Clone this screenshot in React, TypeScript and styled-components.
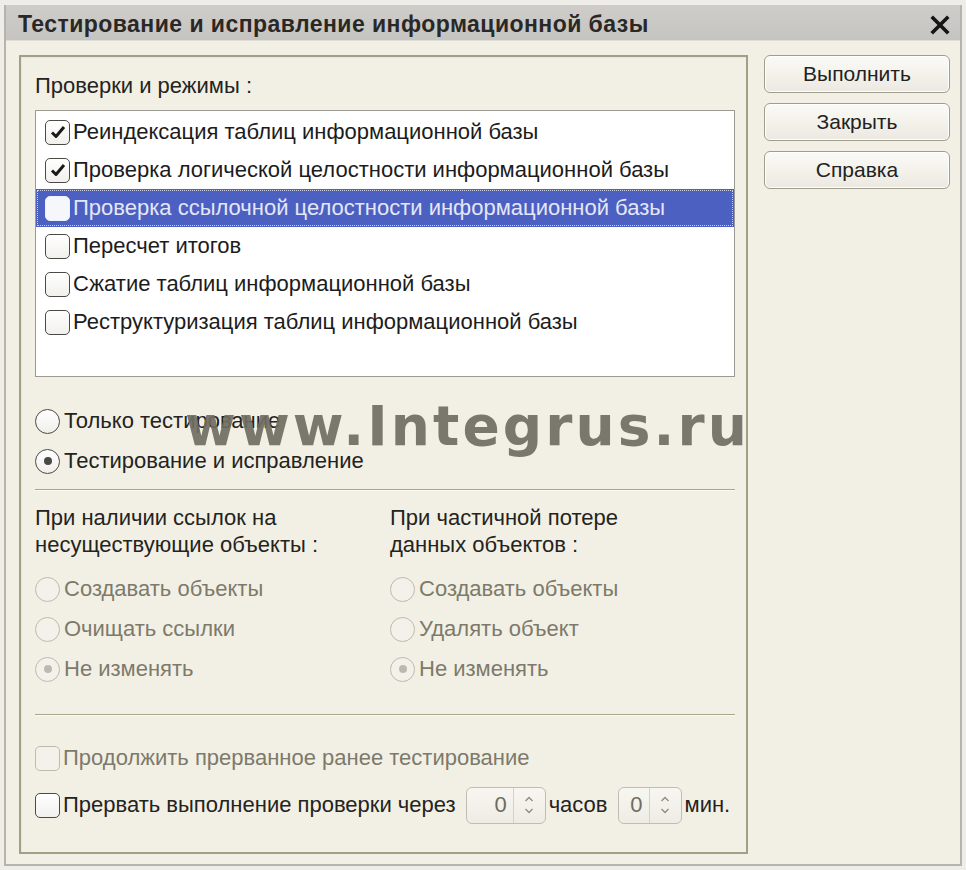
import styled, { createGlobalStyle } from 'styled-components';

const GlobalStyle = createGlobalStyle`
  html, body {
    margin: 0;
    padding: 0;
    background: #f4f3ee;
  }
  * {
    box-sizing: border-box;
  }
`;

const FONT = `"Liberation Sans", Arial, sans-serif`;

const Window = styled.div`
  width: 966px;
  height: 870px;
  padding-top: 5px;
  background: #eeede8;
  font-family: ${FONT};
`;

const Frame = styled.div`
  height: 861px;
  margin: 0 4px;
  border-left: 2px solid #b6b4ae;
  border-right: 2px solid #b6b4ae;
  border-bottom: 2px solid #b6b4ae;
  background: #f2f0e5;
  display: flex;
  flex-direction: column;
`;

const TitleBar = styled.div`
  height: 39px;
  background: linear-gradient(#cfcdca, #c6c4c1);
  display: flex;
  align-items: center;
  justify-content: space-between;
  padding: 4px 8px 0 12px;
  border-bottom: 1px solid #dedcd3;
`;

const Title = styled.div`
  font-size: 23px;
  font-weight: bold;
  color: #2a2826;
  letter-spacing: 0.45px;
`;

const CloseButton = styled.div`
  width: 24px;
  height: 24px;
  display: flex;
  align-items: center;
  justify-content: center;
`;

const Body = styled.div`
  flex: 1;
  display: flex;
  gap: 16px;
  padding: 14px 6px 10px 13px;
`;

const Panel = styled.div`
  width: 729px;
  height: 799px;
  border: 2px solid #a29f86;
  box-shadow: inset 1px 1px 0 #e9e7da;
  padding: 15px 11px 0 14px;
  display: flex;
  flex-direction: column;
  position: relative;
`;

const SideColumn = styled.div`
  width: 186px;
  display: flex;
  flex-direction: column;
  gap: 10px;
`;

const Button = styled.div`
  height: 38px;
  border: 1px solid #a09d8f;
  border-radius: 6px;
  background: linear-gradient(#fbfaf6, #ebe9e0);
  box-shadow: inset 0 0 0 1px #ffffff;
  display: flex;
  align-items: center;
  justify-content: center;
  font-size: 21px;
  color: #222;
`;

const Label = styled.div<{ $disabled?: boolean }>`
  font-size: 22px;
  line-height: 27px;
  color: ${(p) => (p.$disabled ? '#7d7a6b' : '#242320')};
  white-space: nowrap;
`;

const ListBox = styled.div`
  margin-top: 11px;
  height: 267px;
  background: #ffffff;
  border: 1px solid #9c9a94;
  padding: 2px 0 0 0;
`;

const ListRow = styled.div<{ $selected?: boolean }>`
  height: 38px;
  display: flex;
  align-items: center;
  padding-left: 9px;
  font-size: 22px;
  color: ${(p) => (p.$selected ? '#e4e7f6' : '#1c1c1c')};
  background: ${(p) => (p.$selected ? '#4c60c2' : 'transparent')};
  outline: ${(p) => (p.$selected ? '1px dotted #c9cfee' : 'none')};
  outline-offset: -2px;
  white-space: nowrap;
`;

const Box = styled.span<{ $disabled?: boolean; $selected?: boolean }>`
  width: 25px;
  height: 25px;
  flex: none;
  border-radius: 5px;
  border: 1.5px solid
    ${(p) => (p.$selected ? '#eef0f8' : p.$disabled ? '#bdbbaf' : '#4b4a46')};
  background: ${(p) =>
    p.$selected ? '#f6f7fb' : p.$disabled ? '#f3f2ea' : 'linear-gradient(#ffffff, #f1f0ec)'};
  display: flex;
  align-items: center;
  justify-content: center;
  margin-right: 3px;
`;

const Dot = styled.span<{ $disabled?: boolean }>`
  width: 25px;
  height: 25px;
  flex: none;
  border-radius: 50%;
  border: 1.5px solid ${(p) => (p.$disabled ? '#bdbbaf' : '#4b4a46')};
  background: ${(p) => (p.$disabled ? '#f3f2ea' : 'linear-gradient(#ffffff, #efeeea)')};
  display: flex;
  align-items: center;
  justify-content: center;
  margin-right: 4px;
`;

const DotInner = styled.span<{ $disabled?: boolean }>`
  width: 8px;
  height: 8px;
  border-radius: 50%;
  background: ${(p) => (p.$disabled ? '#bcbab0' : '#4a4946')};
`;

const OptionRow = styled.div<{ $disabled?: boolean }>`
  height: 40px;
  display: flex;
  align-items: center;
  font-size: 22px;
  color: ${(p) => (p.$disabled ? '#7d7a6b' : '#242320')};
  white-space: nowrap;
`;

const ModeGroup = styled.div`
  margin-top: 24px;
  display: flex;
  flex-direction: column;
`;

const Separator = styled.div<{ $top: number }>`
  margin-top: ${(p) => p.$top}px;
  height: 2px;
  border-top: 1px solid #aaa68b;
  border-bottom: 1px solid #fbfaf4;
`;

const Columns = styled.div`
  margin-top: 13px;
  display: grid;
  grid-template-columns: 355px 1fr;
`;

const Column = styled.div`
  display: flex;
  flex-direction: column;
`;

const RadioGroup = styled.div`
  margin-top: 11px;
  display: flex;
  flex-direction: column;
`;

const BottomGroup = styled.div`
  margin-top: 22px;
  display: flex;
  flex-direction: column;
  gap: 7px;
`;

const Spinner = styled.div<{ $width: number }>`
  width: ${(p) => p.$width}px;
  height: 37px;
  border: 1px solid #c0beb4;
  border-radius: 6px;
  background: linear-gradient(#f7f6f1, #eeece4);
  display: flex;
  margin: 0 3px 0 10px;
`;

const SpinValue = styled.div`
  flex: 1;
  display: flex;
  align-items: center;
  justify-content: flex-end;
  padding-right: 6px;
  font-size: 22px;
  color: #6d6b62;
  border-right: 1px solid #d3d1c8;
`;

const SpinArrows = styled.div`
  width: 31px;
  display: flex;
  align-items: center;
  justify-content: center;
`;

const Watermark = styled.div`
  position: absolute;
  left: 164px;
  top: 337px;
  font-family: "DejaVu Sans", Verdana, sans-serif;
  font-weight: bold;
  font-size: 55px;
  letter-spacing: 3.1px;
  color: rgba(112, 109, 98, 0.92);
  pointer-events: none;
  white-space: nowrap;
`;

const Check = () => (
  <svg width="18" height="18" viewBox="0 0 18 18">
    <path d="M3 9.5 L7 13.5 L15 4" fill="none" stroke="#1a1a1a" strokeWidth="3" strokeLinejoin="round" />
  </svg>
);

const Arrows = () => (
  <svg width="14" height="26" viewBox="0 0 14 26">
    <path d="M3.5 9 L7 5.5 L10.5 9" fill="none" stroke="#8d8b84" strokeWidth="1.3" />
    <path d="M3.5 17 L7 20.5 L10.5 17" fill="none" stroke="#8d8b84" strokeWidth="1.3" />
  </svg>
);

const checks = [
  { text: 'Реиндексация таблиц информационной базы', checked: true },
  { text: 'Проверка логической целостности информационной базы', checked: true },
  { text: 'Проверка ссылочной целостности информационной базы', checked: false, selected: true },
  { text: 'Пересчет итогов', checked: false },
  { text: 'Сжатие таблиц информационной базы', checked: false },
  { text: 'Реструктуризация таблиц информационной базы', checked: false },
];

const Radio = ({ text, on, disabled }: { text: string; on?: boolean; disabled?: boolean }) => (
  <OptionRow $disabled={disabled}>
    <Dot $disabled={disabled}>{on && <DotInner $disabled={disabled} />}</Dot>
    {text}
  </OptionRow>
);

export default function App() {
  return (
    <>
      <GlobalStyle />
      <Window>
        <Frame>
          <TitleBar>
            <Title>Тестирование и исправление информационной базы</Title>
            <CloseButton>
              <svg width="20" height="20" viewBox="0 0 20 20">
                <path d="M3 3 L17 17 M17 3 L3 17" stroke="#151515" strokeWidth="3.6" strokeLinecap="square" />
              </svg>
            </CloseButton>
          </TitleBar>
          <Body>
            <Panel>
              <Label>Проверки и режимы :</Label>
              <ListBox>
                {checks.map((c) => (
                  <ListRow key={c.text} $selected={c.selected}>
                    <Box $selected={c.selected}>{c.checked && <Check />}</Box>
                    {c.text}
                  </ListRow>
                ))}
              </ListBox>

              <ModeGroup>
                <Radio text="Только тестирование" />
                <Radio text="Тестирование и исправление" on />
              </ModeGroup>

              <Separator $top={8} />

              <Columns>
                <Column>
                  <Label>При наличии ссылок на</Label>
                  <Label>несуществующие объекты :</Label>
                  <RadioGroup>
                    <Radio text="Создавать объекты" disabled />
                    <Radio text="Очищать ссылки" disabled />
                    <Radio text="Не изменять" on disabled />
                  </RadioGroup>
                </Column>
                <Column>
                  <Label>При частичной потере</Label>
                  <Label>данных объектов :</Label>
                  <RadioGroup>
                    <Radio text="Создавать объекты" disabled />
                    <Radio text="Удалять объект" disabled />
                    <Radio text="Не изменять" on disabled />
                  </RadioGroup>
                </Column>
              </Columns>

              <Separator $top={25} />

              <BottomGroup>
                <OptionRow $disabled>
                  <Box $disabled />
                  Продолжить прерванное ранее тестирование
                </OptionRow>
                <OptionRow>
                  <Box />
                  Прервать выполнение проверки через
                  <Spinner $width={80}>
                    <SpinValue>0</SpinValue>
                    <SpinArrows>
                      <Arrows />
                    </SpinArrows>
                  </Spinner>
                  часов
                  <Spinner $width={64}>
                    <SpinValue>0</SpinValue>
                    <SpinArrows>
                      <Arrows />
                    </SpinArrows>
                  </Spinner>
                  мин.
                </OptionRow>
              </BottomGroup>

              <Watermark>www.Integrus.ru</Watermark>
            </Panel>
            <SideColumn>
              <Button>Выполнить</Button>
              <Button>Закрыть</Button>
              <Button>Справка</Button>
            </SideColumn>
          </Body>
        </Frame>
      </Window>
    </>
  );
}
